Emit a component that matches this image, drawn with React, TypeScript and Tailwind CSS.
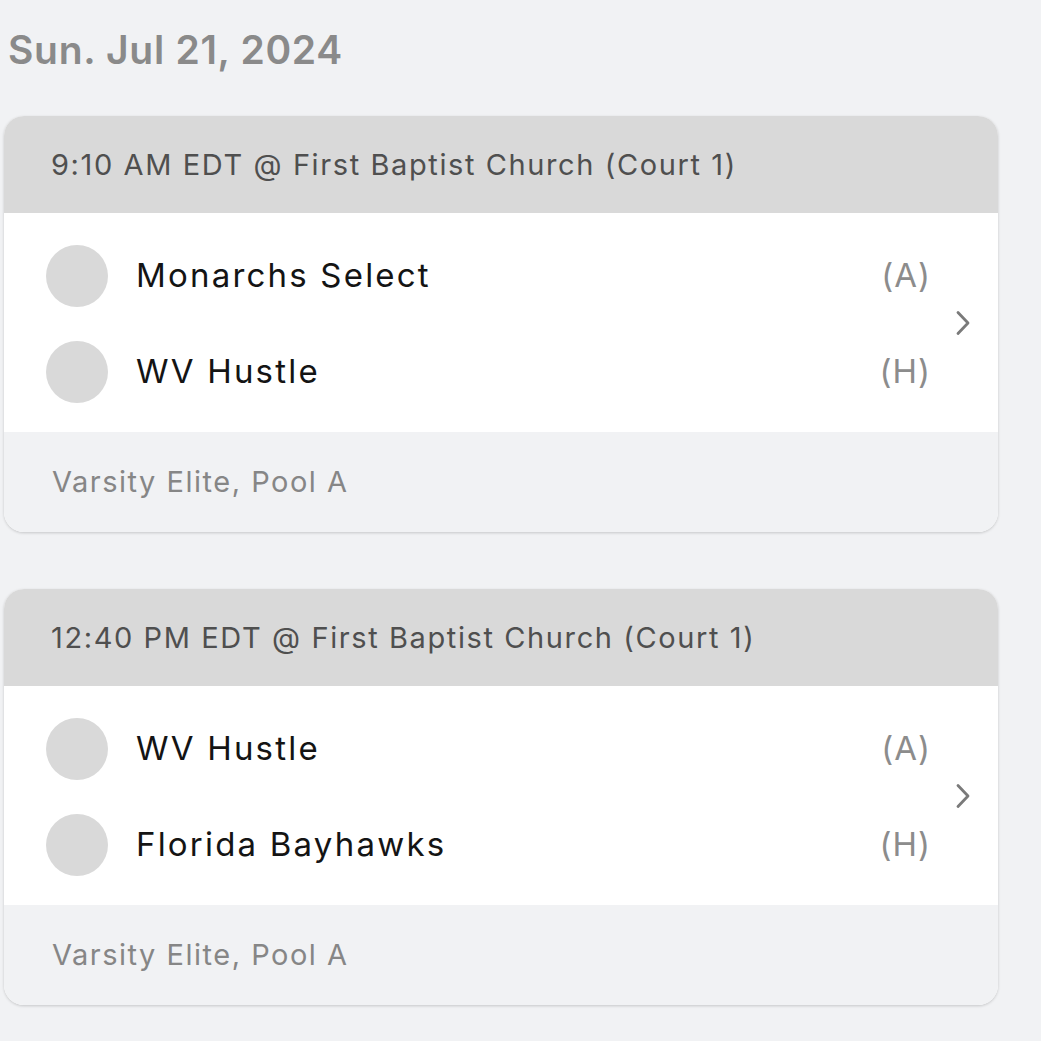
const games = [
  {
    time: '9:10 AM EDT @ First Baptist Church (Court 1)',
    teams: [
      { name: 'Monarchs Select', side: '(A)' },
      { name: 'WV Hustle', side: '(H)' },
    ],
    pool: 'Varsity Elite, Pool A',
  },
  {
    time: '12:40 PM EDT @ First Baptist Church (Court 1)',
    teams: [
      { name: 'WV Hustle', side: '(A)' },
      { name: 'Florida Bayhawks', side: '(H)' },
    ],
    pool: 'Varsity Elite, Pool A',
  },
];

const Chevron = () => (
  <svg width="20" height="30" viewBox="0 0 20 30" fill="none" stroke="#7a7a7a" strokeWidth="2.8" strokeLinecap="round" strokeLinejoin="round">
    <path d="M5 4.5l10 10.5-10 10.5" />
  </svg>
);

export default function App() {
  return (
    <div className="min-h-screen bg-[#f1f2f4] pt-[28px] pl-[4px] pr-[43px] font-['Inter',sans-serif]">
      <h1 className="pl-[4px] text-[39px] leading-[44px] font-semibold text-[#8a8a8a] tracking-[0.7px]">Sun. Jul 21, 2024</h1>
      <div className="mt-[44px] flex flex-col gap-[57px]">
        {games.map((g, i) => (
          <div key={i} className="rounded-[20px] overflow-hidden bg-white shadow-[0_1px_3px_rgba(0,0,0,0.18)]">
            <div className="h-[97px] bg-[#d9d9d9] flex items-center pl-[47px] text-[29px] tracking-[1.6px] text-[#4f4f4f]">{g.time}</div>
            <div className="flex items-center">
              <div className="flex-1 flex flex-col gap-[34px] pt-[32px] pb-[29px]">
                {g.teams.map((t, j) => (
                  <div key={j} className="h-[62px] flex items-center pl-[42px]">
                    <div className="w-[62px] h-[62px] rounded-full bg-[#d9d9d9]" />
                    <span className="ml-[28px] flex-1 text-[33px] tracking-[2.2px] text-[#141414]">{t.name}</span>
                    <span className="-mr-[3px] text-[33px] tracking-[1px] text-[#8c8c8c]">{t.side}</span>
                  </div>
                ))}
              </div>
              <div className="w-[70px] flex justify-center">
                <Chevron />
              </div>
            </div>
            <div className="h-[100px] bg-[#f1f2f4] flex items-center pl-[48px] text-[29px] tracking-[1.5px] text-[#868686]">{g.pool}</div>
          </div>
        ))}
      </div>
    </div>
  );
}
